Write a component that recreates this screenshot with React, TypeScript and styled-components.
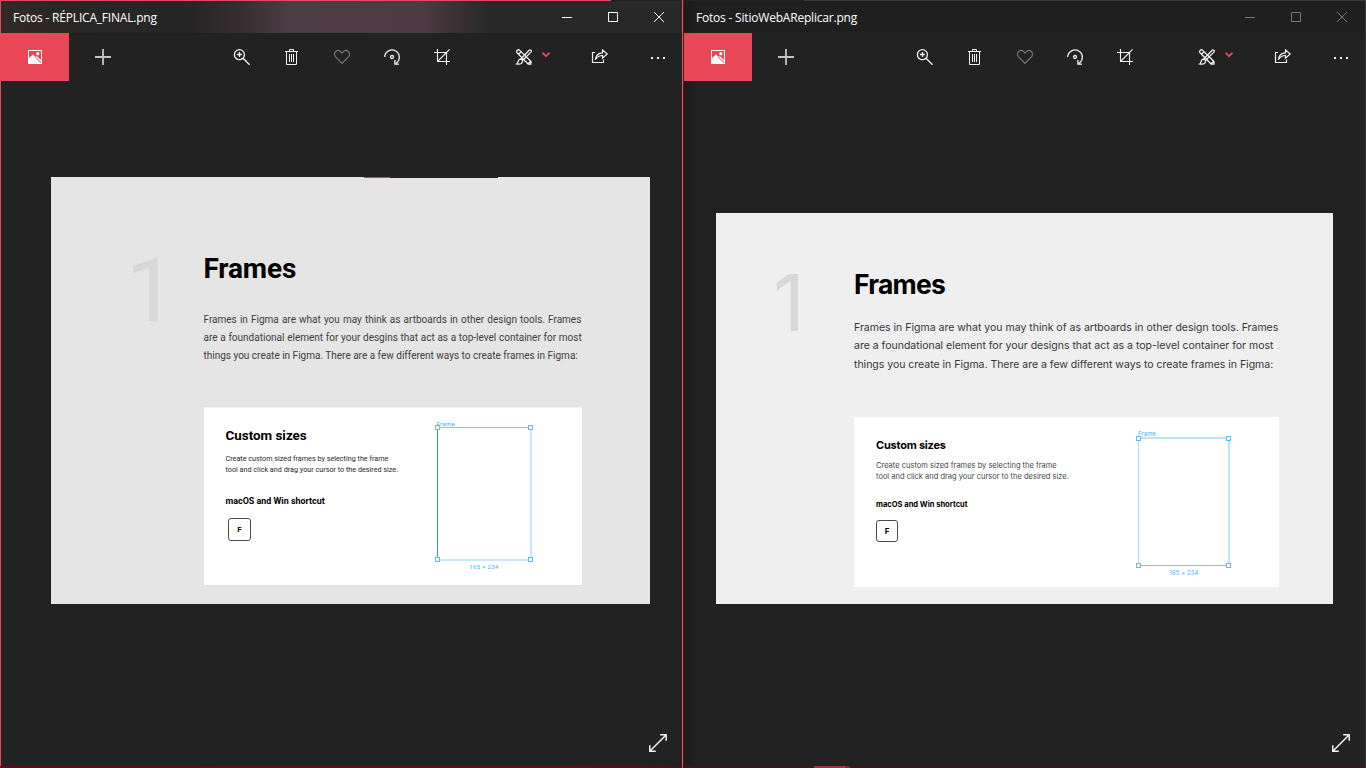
import React from "react";
import styled, { createGlobalStyle } from "styled-components";

const GlobalStyle = createGlobalStyle`
  * { box-sizing: border-box; }
  html, body { margin: 0; padding: 0; background: #212121; }
  body { width: 1366px; height: 768px; overflow: hidden; }
  svg { display: block; flex: none; }
`;

const Desktop = styled.main`
  display: flex;
  width: 1366px;
  height: 768px;
  overflow: hidden;
  background: #212121;
`;

const Window = styled.section<{ $active?: boolean }>`
  display: flex;
  flex-direction: column;
  width: 683px;
  height: 768px;
  background: ${(p) => (p.$active ? "#222222" : "linear-gradient(90deg, #1b1b1b 0, #222222 14px)")};
  border-left: 1px solid ${(p) => (p.$active ? "#e54856" : "#431d22")};
  border-right: 1px solid ${(p) => (p.$active ? "#e8505d" : "#3c3c3c")};
`;

const TitleBar = styled.header<{ $active?: boolean }>`
  display: flex;
  align-items: center;
  height: 33px;
  padding-left: 12px;
  font-family: "Open Sans", "Noto Sans", sans-serif;
  color: #ffffff;
  background: ${(p) =>
    p.$active
      ? `linear-gradient(90deg, #e54856 610px, #222222 610px) 0 0 / 100% 1px no-repeat,
         linear-gradient(90deg, #322926 0, #272625 90px, #252525 190px, #3a3034 250px, #4d3d44 290px, #4d3b43 420px, #3a3134 455px, #282828 490px, #282828 100%)`
      : `linear-gradient(90deg, #222222 120px, #3a3a3a 120px) 0 0 / 100% 1px no-repeat,
         linear-gradient(90deg, #1a1a1a 0, #1f1f1f 14px)`};
`;

const Title = styled.span`
  flex: 1;
  font-size: 12px;
  line-height: 16px;
  padding-top: 2px;
  white-space: nowrap;
  letter-spacing: -0.2px;
`;

const Caption = styled.div<{ $active?: boolean }>`
  display: flex;
  color: ${(p) => (p.$active ? "#ffffff" : "#777777")};
`;

const CaptionButton = styled.span`
  display: flex;
  justify-content: center;
  width: 46px;
`;

const Toolbar = styled.nav`
  display: flex;
  height: 48px;
  color: #f2f2f2;
`;

const Tab = styled.span<{ $selected?: boolean }>`
  display: flex;
  flex: none;
  align-items: center;
  justify-content: center;
  width: 68px;
  height: 48px;
  background: ${(p) => (p.$selected ? "#e84855" : "transparent")};
`;

const Tools = styled.div<{ $start: number }>`
  display: flex;
  flex: none;
  margin-left: ${(p) => p.$start}px;
`;

const Tool = styled.span<{ $width?: number; $dim?: boolean }>`
  display: flex;
  align-items: center;
  justify-content: center;
  width: ${(p) => p.$width ?? 50}px;
  height: 48px;
  color: ${(p) => (p.$dim ? "#777777" : "inherit")};
`;

const Chevron = styled.span`
  display: flex;
  width: 8px;
  margin: 19px 0 0 -7px;
`;

const Canvas = styled.div`
  display: flex;
  flex: 1;
  flex-direction: column;
`;

const StatusRow = styled.footer`
  display: flex;
  flex: 1;
  align-items: flex-end;
  justify-content: flex-end;
  padding: 0 15px 14px 0;
  color: #f2f2f2;
`;

const Taskbar = styled.div<{ $highlight?: boolean }>`
  height: 2px;
  margin-left: -1px;
  background: ${(p) =>
    p.$highlight
      ? "linear-gradient(90deg, transparent 131px, #9a3642 131px 163px, #5a1c22 163px 164px, #7a2b34 164px 167px, transparent 167px), #3c171a"
      : "linear-gradient(90deg, #5a0f18, #5c1019 80%, #4a141a)"};
`;

const Sheet = styled.article<{ $replica?: boolean }>`
  display: flex;
  flex: none;
  width: ${(p) => (p.$replica ? 599 : 617)}px;
  height: ${(p) => (p.$replica ? 427 : 391)}px;
  margin: ${(p) => (p.$replica ? "96px 0 0 50px" : "132px 0 0 32px")};
  font-family: ${(p) => (p.$replica ? "Roboto" : "Inter")}, "Liberation Sans", sans-serif;
  color: #000000;
  background: ${(p) =>
    p.$replica
      ? "linear-gradient(90deg, transparent 313px, #d04450 313px 339px, #222222 339px 447px, transparent 447px) 0 0 / 100% 1px no-repeat, #e5e5e5"
      : "#efefef"};
`;

const Numeral = styled.div<{ $size: number; $top: number; $left: number; $width: number }>`
  flex: none;
  width: ${(p) => p.$width}px;
  margin: ${(p) => p.$top}px 0 0 ${(p) => p.$left}px;
  font-size: ${(p) => p.$size}px;
  font-weight: 400;
  line-height: 64px;
  color: #d8d8d8;
`;

const Content = styled.div<{ $width: number; $top: number }>`
  width: ${(p) => p.$width}px;
  padding-top: ${(p) => p.$top}px;
`;

interface LineProps {
  $size: number;
  $lh: number;
  $weight?: number;
  $tracking?: number;
  $word?: number;
  $color?: string;
  $top?: number;
}

const Line = styled.span<LineProps>`
  display: block;
  width: max-content;
  margin-top: ${(p) => p.$top ?? 0}px;
  font-size: ${(p) => p.$size}px;
  font-weight: ${(p) => p.$weight ?? 400};
  line-height: ${(p) => p.$lh}px;
  letter-spacing: ${(p) => p.$tracking ?? 0}px;
  word-spacing: ${(p) => p.$word ?? 0}px;
  color: ${(p) => p.$color ?? "inherit"};
  white-space: nowrap;
`;

const Card = styled.div<{ $height: number; $top: number; $edge: string }>`
  display: flex;
  height: ${(p) => p.$height}px;
  margin-top: ${(p) => p.$top}px;
  padding-left: 22px;
  border-top: 1px solid ${(p) => p.$edge};
  background: #ffffff;
`;

const CardText = styled.div<{ $width: number; $top: number }>`
  flex: none;
  width: ${(p) => p.$width}px;
  padding-top: ${(p) => p.$top}px;
`;

const Key = styled.kbd<{ $size: number; $top: number; $left: number }>`
  display: flex;
  align-items: center;
  justify-content: center;
  width: ${(p) => p.$size}px;
  height: ${(p) => p.$size}px;
  margin: ${(p) => p.$top}px 0 0 ${(p) => p.$left}px;
  border: 1px solid #4a4a4a;
  border-radius: 3px;
  font-family: inherit;
  font-size: 8px;
  font-weight: 700;
`;

const Selection = styled.div<{ $top: number; $width: number }>`
  display: flex;
  flex: none;
  flex-direction: column;
  align-items: center;
  width: ${(p) => p.$width}px;
  padding-top: ${(p) => p.$top}px;
  color: #45aef7;
`;

const SelectionLabel = styled.span<{ $size: number; $tracking: number }>`
  align-self: flex-start;
  height: 7px;
  font-size: ${(p) => p.$size}px;
  line-height: 7px;
  letter-spacing: ${(p) => p.$tracking}px;
  white-space: nowrap;
`;

const SelectionSize = styled(SelectionLabel)<{ $gap: number }>`
  align-self: center;
  margin-top: ${(p) => p.$gap}px;
`;

const SelectionBox = styled.div<{ $height: number; $widths: string; $colors: string }>`
  position: relative;
  width: 100%;
  height: ${(p) => p.$height}px;
  border-style: solid;
  border-width: ${(p) => p.$widths};
  border-color: ${(p) => p.$colors};
`;

const Handle = styled.i<{ $x: "left" | "right"; $y: "top" | "bottom" }>`
  position: absolute;
  ${(p) => p.$x}: -3px;
  ${(p) => p.$y}: -3px;
  width: 5px;
  height: 5px;
  border: 1px solid #62bbf9;
  background: #ffffff;
`;

const PictureIcon = () => (
  <svg width="14" height="14" viewBox="0 0 14 14">
    <path fill="#fff" fillRule="evenodd" d="M0 0H14V14H0ZM1 1V8L5 4.5L7.5 7L8.8 6L13 10V1Z" />
    <circle cx="9.8" cy="3.7" r="1.6" fill="#fff" />
    <path d="M7.3 7.2L13 12.6" stroke="#e84855" strokeWidth="1" />
  </svg>
);

const PlusIcon = () => (
  <svg width="16" height="16" viewBox="0 0 16 16" fill="none" stroke="#c4c4c4" strokeWidth="1.8">
    <path d="M8 0V16M0 8H16" />
  </svg>
);

const ToolIcon = ({ shift, weight = 1.2, children }: { shift: number; weight?: number; children: React.ReactNode }) => (
  <svg width="18" height="16" viewBox={`${-shift} 0 18 16`} fill="none" stroke="currentColor" strokeWidth={weight}>
    {children}
  </svg>
);

const ZoomIcon = () => (
  <ToolIcon shift={0} weight={1.3}>
    <circle cx="6.4" cy="5.7" r="5" />
    <path d="M10 9.3L16.6 15.8M3.9 5.5H8.9M6.5 3V8" />
  </ToolIcon>
);

const TrashIcon = () => (
  <ToolIcon shift={2} weight={1}>
    <path d="M0 2.5H13M4.5 2.5V0.5H8.5V2.5M1.5 2.5V15.5H11.5V2.5M4.5 5V13M6.5 5V13M8.5 5V13" />
  </ToolIcon>
);

const HeartIcon = () => (
  <ToolIcon shift={1}>
    <path d="M8 14.4L1.6 7.9C-0.2 6 0.4 3.4 1.9 2.3C3.5 1.1 5.3 1.4 6.6 2.7L8 4.1L9.4 2.7C10.7 1.4 12.5 1.1 14.1 2.3C15.6 3.4 16.2 6 14.4 7.9Z" />
  </ToolIcon>
);

const RotateIcon = () => (
  <ToolIcon shift={1} weight={1.3}>
    <path d="M0.7 8A7.3 7.3 0 1 1 11.7 14.6" />
    <path d="M10.9 11V15.2H15" />
    <circle cx="8" cy="8" r="1.5" />
  </ToolIcon>
);

const CropIcon = () => (
  <ToolIcon shift={1} weight={1.1}>
    <path d="M3.5 0V12.5H16M0 3.5H12.5V16M3.5 12.5L15.6 0.4" />
  </ToolIcon>
);

const MarkupIcon = () => (
  <ToolIcon shift={1} weight={1.25}>
    <path strokeLinejoin="round" d="M3.2 0.9L15 12.5V15.2H12.3L0.8 3.5C0.2 1.8 1.5 0.3 3.2 0.9ZM2.5 5.2L5 2.7M12 14.8L14.8 12.2" />
    <path d="M4.6 10.2L13.1 1.2C14.5 0.2 16 1.7 14.9 3.1L6.2 11.8" />
    <path d="M4.3 10.2C6 10.2 6.8 11.3 6.5 12.5C6 15 3 15.4 0.7 15C2.2 14.4 1.7 10.3 4.3 10.2Z" />
  </ToolIcon>
);

const ChevronIcon = () => (
  <svg width="8" height="6" viewBox="0 0 8 6" fill="none" stroke="#e84855" strokeWidth="1.7">
    <path d="M0.5 0.7L4 4.2L7.5 0.7" />
  </svg>
);

const ShareIcon = () => (
  <ToolIcon shift={1}>
    <path d="M3 3.5H0.5V13.5H11.5V10.5" />
    <path d="M3.3 10.6C3.8 6.3 6.3 3.9 10.5 3.8V0.9L15.2 5L10.5 9.1V6.5C7 6.5 5.2 7.6 3.3 10.6Z" />
  </ToolIcon>
);

const MoreIcon = () => (
  <svg width="14" height="4" viewBox="0 0 14 4" fill="currentColor">
    <path d="M0 2H2V4H0ZM6 2H8V4H6ZM12 2H14V4H12Z" />
  </svg>
);

const ExpandIcon = () => (
  <svg width="18" height="18" viewBox="0 0 18 18" fill="none" stroke="currentColor" strokeWidth="1.5">
    <path d="M1 17L17 1M11.2 0.8H17.2V6.8M6.8 17.2H0.8V11.2" />
  </svg>
);

const MinimizeIcon = () => (
  <svg width="10" height="10" viewBox="0 0 10 10" stroke="currentColor">
    <path d="M0 5.5H10" />
  </svg>
);

const MaximizeIcon = () => (
  <svg width="10" height="10" viewBox="0 0 10 10" fill="none" stroke="currentColor">
    <path d="M0.5 0.5H9.5V9.5H0.5Z" />
  </svg>
);

const CloseIcon = () => (
  <svg width="10" height="10" viewBox="0 0 10 10" stroke="currentColor">
    <path d="M0 0L10 10M10 0L0 10" />
  </svg>
);

function PhotoWindow({ title, active, children }: { title: string; active?: boolean; children: React.ReactNode }) {
  return (
    <Window $active={active}>
      <TitleBar $active={active}>
        <Title>{title}</Title>
        <Caption $active={active}>
          <CaptionButton><MinimizeIcon /></CaptionButton>
          <CaptionButton><MaximizeIcon /></CaptionButton>
          <CaptionButton><CloseIcon /></CaptionButton>
        </Caption>
      </TitleBar>
      <Toolbar>
        <Tab $selected><PictureIcon /></Tab>
        <Tab><PlusIcon /></Tab>
        <Tools $start={80}>
          <Tool><ZoomIcon /></Tool>
          <Tool><TrashIcon /></Tool>
          <Tool $dim><HeartIcon /></Tool>
          <Tool><RotateIcon /></Tool>
          <Tool><CropIcon /></Tool>
        </Tools>
        <Tools $start={32}>
          <Tool><MarkupIcon /></Tool>
          <Chevron><ChevronIcon /></Chevron>
        </Tools>
        <Tools $start={25}>
          <Tool><ShareIcon /></Tool>
        </Tools>
        <Tools $start={9}>
          <Tool $width={48}><MoreIcon /></Tool>
        </Tools>
      </Toolbar>
      <Canvas>
        {children}
        <StatusRow><ExpandIcon /></StatusRow>
      </Canvas>
      <Taskbar $highlight={!active} />
    </Window>
  );
}

interface FrameSelectionProps {
  top: number;
  width: number;
  height: number;
  widths: string;
  colors: string;
  size: number;
  tracking: number;
  gap: number;
}

function FrameSelection({ top, width, height, widths, colors, size, tracking, gap }: FrameSelectionProps) {
  return (
    <Selection $top={top} $width={width}>
      <SelectionLabel $size={size} $tracking={tracking}>Frame</SelectionLabel>
      <SelectionBox $height={height} $widths={widths} $colors={colors}>
        <Handle $x="left" $y="top" />
        <Handle $x="right" $y="top" />
        <Handle $x="left" $y="bottom" />
        <Handle $x="right" $y="bottom" />
      </SelectionBox>
      <SelectionSize $size={size} $tracking={tracking} $gap={gap}>165 × 234</SelectionSize>
    </Selection>
  );
}

export default function App() {
  return (
    <>
      <GlobalStyle />
      <Desktop>
        <PhotoWindow title="Fotos - RÉPLICA_FINAL.png" active>
          <Sheet $replica>
            <Numeral $size={88.5} $top={82} $left={75} $width={77.5}>1</Numeral>
            <Content $width={378.5} $top={76}>
              <Line $size={28} $lh={32} $weight={700} $tracking={-0.15}>Frames</Line>
              <Line $size={10} $lh={17.9} $word={0.65} $color="#404040" $top={26}>Frames in Figma are what you may think as artboards in other design tools. Frames</Line>
              <Line $size={10} $lh={17.9} $word={0.22} $color="#404040">are a foundational element for your desgins that act as a top-level container for most</Line>
              <Line $size={10} $lh={17.9} $color="#404040">things you create in Figma. There are a few different ways to create frames in Figma:</Line>
              <Card $height={178} $top={42.3} $edge="#f3f3f3">
                <CardText $width={211} $top={20}>
                  <Line $size={13.4} $lh={16} $weight={700}>Custom sizes</Line>
                  <Line $size={7.22} $lh={10.5} $color="#262626" $top={10.2}>Create custom sized frames by selecting the frame</Line>
                  <Line $size={7.22} $lh={10.5} $color="#262626">tool and click and drag your cursor to the desired size.</Line>
                  <Line $size={8.93} $lh={12} $weight={700} $top={19.8}>macOS and Win shortcut</Line>
                  <Key $size={23} $top={11} $left={2.5}>F</Key>
                </CardText>
                <FrameSelection
                  top={12}
                  width={95}
                  height={134}
                  widths="1px 2px 2px 1px"
                  colors="#7cc7fa #c8e8fd #c8e8fd #2f98e0"
                  size={6}
                  tracking={0.3}
                  gap={2}
                />
              </Card>
            </Content>
          </Sheet>
        </PhotoWindow>
        <PhotoWindow title="Fotos - SitioWebAReplicar.png">
          <Sheet>
            <Numeral $size={78} $top={58} $left={57} $width={81}>1</Numeral>
            <Content $width={425} $top={55}>
              <Line $size={26.5} $lh={32} $weight={700} $tracking={-0.75}>Frames</Line>
              <Line $size={10.5} $lh={18.4} $color="#363636" $top={18.8}>Frames in Figma are what you may think of as artboards in other design tools. Frames</Line>
              <Line $size={10.5} $lh={18.4} $color="#363636">are a foundational element for your designs that act as a top-level container for most</Line>
              <Line $size={10.5} $lh={18.4} $color="#363636" $tracking={-0.012}>things you create in Figma. There are a few different ways to create frames in Figma:</Line>
              <Card $height={170} $top={43} $edge="#fdfdfd">
                <CardText $width={262} $top={18.5}>
                  <Line $size={11} $lh={16} $weight={700} $tracking={-0.22}>Custom sizes</Line>
                  <Line $size={7.5} $lh={11.9} $color="#444444" $top={7}>Create custom sized frames by selecting the frame</Line>
                  <Line $size={7.5} $lh={11.9} $color="#444444">tool and click and drag your cursor to the desired size.</Line>
                  <Line $size={7.6} $lh={12} $weight={700} $tracking={-0.03} $top={15.7}>macOS and Win shortcut</Line>
                  <Key $size={22} $top={8.5} $left={0}>F</Key>
                </CardText>
                <FrameSelection
                  top={12}
                  width={92}
                  height={129}
                  widths="2px 2px 1px 1px"
                  colors="#bfe3fd #bfe3fd #6fc4fb #a6d8fb"
                  size={5.8}
                  tracking={0.15}
                  gap={3}
                />
              </Card>
            </Content>
          </Sheet>
        </PhotoWindow>
      </Desktop>
    </>
  );
}
